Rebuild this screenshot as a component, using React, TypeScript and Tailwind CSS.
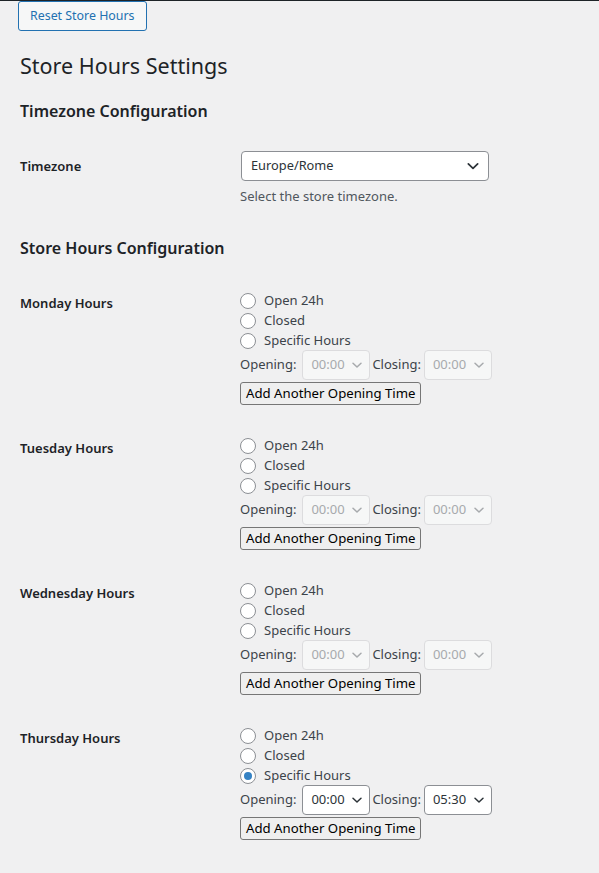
import React from 'react'

const font = { fontFamily: '"Noto Sans", "Open Sans", sans-serif' }

function Chevron({ className }: { className?: string }) {
  return (
    <svg className={className} width="12" height="12" viewBox="0 0 12 12" fill="none">
      <path d="M2 4.2l4 3.8 4-3.8" stroke="currentColor" strokeWidth="1.5" strokeLinecap="round" strokeLinejoin="round" />
    </svg>
  )
}

function Radio({ checked }: { checked?: boolean }) {
  return (
    <span className="w-4 h-4 rounded-full border border-[#8c8f94] bg-white flex items-center justify-center shrink-0">
      {checked && <span className="w-2 h-2 rounded-full bg-[#3582c4]" />}
    </span>
  )
}

function TimeSelect({ value, disabled }: { value: string; disabled?: boolean }) {
  return (
    <div
      className={
        disabled
          ? 'h-[30px] w-[68px] rounded-[4px] border border-[#dcdcde] bg-[#f6f7f7] text-[#a7aaad] flex items-center justify-between pl-[8px] pr-[6px] text-[13px]'
          : 'h-[30px] w-[68px] rounded-[4px] border border-[#8c8f94] bg-white text-[#2c3338] flex items-center justify-between pl-[8px] pr-[6px] text-[13px]'
      }
    >
      <span>{value}</span>
      <Chevron className="w-[12px] h-[12px]" />
    </div>
  )
}

type Day = { name: string; specific?: boolean; open: string; close: string }

const days: Day[] = [
  { name: 'Monday Hours', open: '00:00', close: '00:00' },
  { name: 'Tuesday Hours', open: '00:00', close: '00:00' },
  { name: 'Wednesday Hours', open: '00:00', close: '00:00' },
  { name: 'Thursday Hours', specific: true, open: '00:00', close: '05:30' },
]

function DayRow({ day }: { day: Day }) {
  return (
    <div className="flex">
      <div className="w-[240px] shrink-0 pl-5 mt-[2px] text-[13px] leading-5 font-semibold text-[#1d2327]">{day.name}</div>
      <div className="flex flex-col text-[13px] text-[#3c434a]">
        {['Open 24h', 'Closed', 'Specific Hours'].map((label) => (
          <div key={label} className="h-5 flex items-center gap-2">
            <Radio checked={day.specific && label === 'Specific Hours'} />
            <span>{label}</span>
          </div>
        ))}
        <div className="flex items-center mt-[-1px]">
          <span>Opening:</span>
          <span className="ml-[6px]">
            <TimeSelect value={day.open} disabled={!day.specific} />
          </span>
          <span className="ml-[2px]">Closing:</span>
          <span className="ml-[3px]">
            <TimeSelect value={day.close} disabled={!day.specific} />
          </span>
        </div>
        <div className="mt-[2px]">
          <button className="h-[23px] px-[5px] rounded-[3px] border border-[#767676] bg-[#efefef] text-[13.2px] text-black leading-none">
            Add Another Opening Time
          </button>
        </div>
      </div>
    </div>
  )
}

export default function App() {
  return (
    <div className="min-h-screen w-[599px] bg-[#f0f0f1]" style={font}>
      <div className="h-px bg-[#1d2327]" />
      <div className="pl-[18px]">
        <button className="h-[30px] px-[11px] rounded-[3px] border border-[#2271b1] bg-[#f6f7f7] text-[#2271b1] text-[12.4px]">
          Reset Store Hours
        </button>
      </div>
      <h1 className="mt-5 pl-5 text-[21.5px] leading-[30px] text-[#1d2327]">Store Hours Settings</h1>
      <h2 className="mt-[15px] pl-5 text-[16px] leading-[30px] font-semibold text-[#1d2327]">Timezone Configuration</h2>

      <div className="flex mt-[25px]">
        <div className="w-[240px] shrink-0 pl-5 pt-[5px] text-[13px] leading-5 font-semibold text-[#1d2327]">Timezone</div>
        <div className="flex flex-col">
          <div className="ml-px h-[30px] w-[248px] rounded-[4px] border border-[#8c8f94] bg-white flex items-center justify-between pl-[9px] pr-[8px] text-[12.8px] text-[#2c3338]">
            <span>Europe/Rome</span>
            <Chevron className="w-[14px] h-[14px] text-[#2c3338]" />
          </div>
          <p className="mt-[5px] text-[13px] leading-5 text-[#50575e]">Select the store timezone.</p>
        </div>
      </div>

      <h2 className="mt-[27px] pl-5 text-[16px] leading-[30px] font-semibold text-[#1d2327]">Store Hours Configuration</h2>

      <div className="mt-[28px] flex flex-col gap-[31px] pb-10">
        {days.map((d) => (
          <DayRow key={d.name} day={d} />
        ))}
      </div>
    </div>
  )
}
